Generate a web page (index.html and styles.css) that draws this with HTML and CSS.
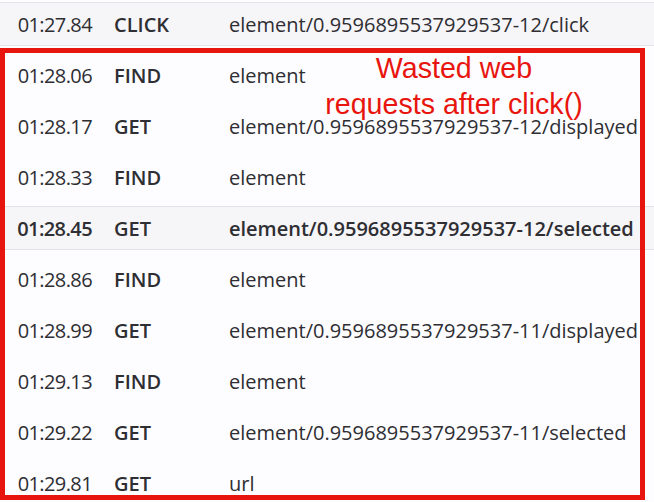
FILE: index.html
```html
<!DOCTYPE html>
<html>
  <head>
    <meta charset='utf-8'>
    <title>Command log</title>
    <link rel="stylesheet" href="styles.css">
  </head>
  <body>
    <div class="log">
      <div class="row shaded">
        <div class="time">01:27.84</div>
        <div class="method">CLICK</div>
        <div class="path">element/0.9596895537929537-12/click</div>
      </div>
      <div class="row">
        <div class="time">01:28.06</div>
        <div class="method">FIND</div>
        <div class="path">element</div>
      </div>
      <div class="row">
        <div class="time">01:28.17</div>
        <div class="method">GET</div>
        <div class="path">element/0.9596895537929537-12/displayed</div>
      </div>
      <div class="row">
        <div class="time">01:28.33</div>
        <div class="method">FIND</div>
        <div class="path">element</div>
      </div>
      <div class="row shaded current">
        <div class="time">01:28.45</div>
        <div class="method">GET</div>
        <div class="path">element/0.9596895537929537-12/selected</div>
      </div>
      <div class="row">
        <div class="time">01:28.86</div>
        <div class="method">FIND</div>
        <div class="path">element</div>
      </div>
      <div class="row">
        <div class="time">01:28.99</div>
        <div class="method">GET</div>
        <div class="path">element/0.9596895537929537-11/displayed</div>
      </div>
      <div class="row">
        <div class="time">01:29.13</div>
        <div class="method">FIND</div>
        <div class="path">element</div>
      </div>
      <div class="row">
        <div class="time">01:29.22</div>
        <div class="method">GET</div>
        <div class="path">element/0.9596895537929537-11/selected</div>
      </div>
      <div class="row">
        <div class="time">01:29.81</div>
        <div class="method">GET</div>
        <div class="path">url</div>
      </div>
    </div>

    <div class="callout">
      <div class="note">Wasted web<br>requests after click()</div>
    </div>
  </body>
</html>
```

FILE: styles.css
```css
body {
  margin: 0;
  background: #fdfdff;
  font-family: "Open Sans", sans-serif;
  color: #2e2e33;
  overflow: hidden;
}

.log {
  display: flex;
  flex-direction: column;
  gap: 7px;
  padding-top: 2px;
}

.row {
  display: grid;
  grid-template-columns: 92px 93px 1fr;
  column-gap: 22px;
  align-items: center;
  height: 44px;
  box-sizing: border-box;
  font-size: 20px;
  white-space: nowrap;
}

.row.shaded {
  background: #f6f5f8;
  border-top: 1px solid #e4e3e8;
  border-bottom: 1px solid #e4e3e8;
}

.time {
  text-align: right;
  letter-spacing: -0.6px;
}

.method {
  font-weight: 600;
}

.current {
  font-weight: 600;
}

/* annotation drawn over the log */
.callout {
  position: absolute;
  left: 0;
  top: 48px;
  width: 645px;
  height: 452px;
  box-sizing: border-box;
  border: 5px solid #e8150e;
}

.note {
  width: 300px;
  margin: -3px 0 0 299px;
  text-align: center;
  font-family: "Liberation Sans", Arial, sans-serif;
  font-size: 28.6px;
  line-height: 36px;
  color: #e8150e;
}
```
